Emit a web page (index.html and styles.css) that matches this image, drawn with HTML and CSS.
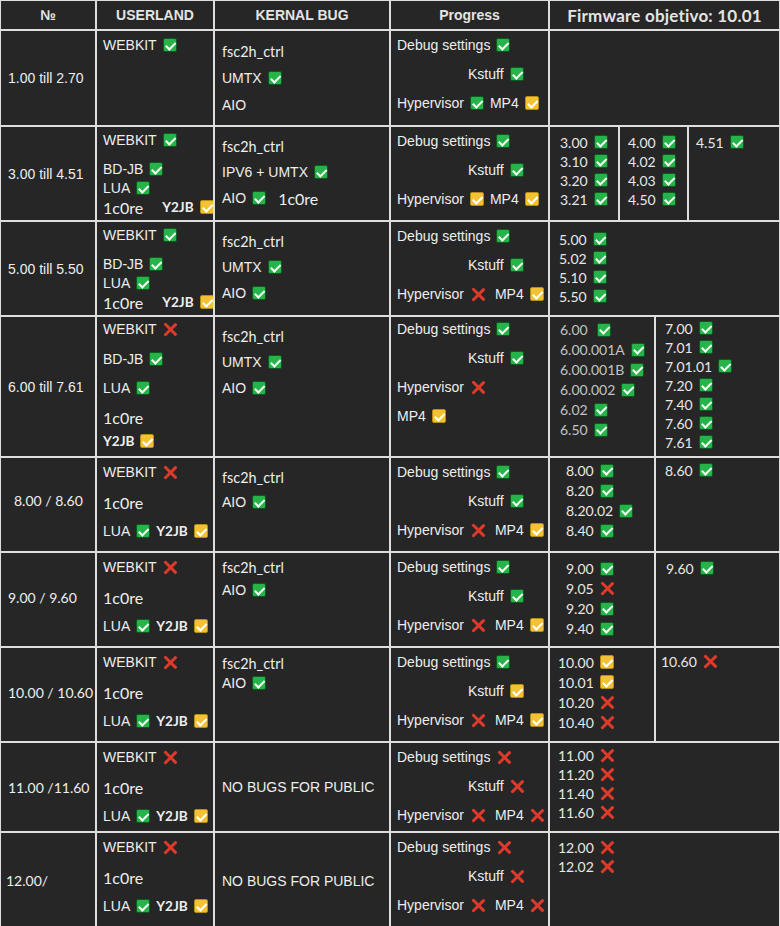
FILE: index.html
```html
<!DOCTYPE html>
<html lang="es">
<head>
<meta charset="utf-8">
<title>PS5 exploit table</title>
<link rel="stylesheet" href="styles.css">
</head>
<body>
<div class="tbl">
  <!-- header -->
  <div class="c hd">№</div>
  <div class="c hd">USERLAND</div>
  <div class="c hd">KERNAL BUG</div>
  <div class="c hd">Progress</div>
  <div class="c hd fw">Firmware objetivo: 10.01</div>

  <!-- row 1 -->
  <div class="c lbl">1.00 till 2.70</div>
  <div class="c st u1"><div class="ln">WEBKIT<i class="ic ok"></i></div></div>
  <div class="c st kr k1">
    <div class="ln cb">fsc2h_ctrl</div>
    <div class="ln">UMTX<i class="ic ok"></i></div>
    <div class="ln">AIO</div>
  </div>
  <div class="c st pg">
    <div class="ln">Debug settings<i class="ic ok"></i></div>
    <div class="ln ks">Kstuff<i class="ic ok"></i></div>
    <div class="ln">Hypervisor<i class="ic ok"></i><span class="sp">MP4</span><i class="ic yl"></i></div>
  </div>
  <div class="c"></div>

  <!-- row 2 -->
  <div class="c lbl">3.00 till 4.51</div>
  <div class="c st uA">
    <div class="ln">WEBKIT<i class="ic ok"></i></div>
    <div class="ln">BD-JB<i class="ic ok"></i></div>
    <div class="ln">LUA<i class="ic ok"></i></div>
    <div class="ln"><span class="cb core">1c0re</span><span class="y2 far">Y2JB</span><i class="ic yl"></i></div>
  </div>
  <div class="c st kr kA">
    <div class="ln cb">fsc2h_ctrl</div>
    <div class="ln">IPV6 + UMTX<i class="ic ok"></i></div>
    <div class="ln">AIO<i class="ic ok"></i><span class="cb core after">1c0re</span></div>
  </div>
  <div class="c st pg">
    <div class="ln">Debug settings<i class="ic ok"></i></div>
    <div class="ln ks">Kstuff<i class="ic ok"></i></div>
    <div class="ln">Hypervisor<i class="ic yl"></i><span class="sp">MP4</span><i class="ic yl"></i></div>
  </div>
  <div class="c split s3">
    <div class="vl p5 l10">
      <div class="v">3.00<i class="ic ok"></i></div>
      <div class="v">3.10<i class="ic ok"></i></div>
      <div class="v">3.20<i class="ic ok"></i></div>
      <div class="v">3.21<i class="ic ok"></i></div>
    </div>
    <div class="vl p5 l8">
      <div class="v">4.00<i class="ic ok"></i></div>
      <div class="v">4.02<i class="ic ok"></i></div>
      <div class="v">4.03<i class="ic ok"></i></div>
      <div class="v">4.50<i class="ic ok"></i></div>
    </div>
    <div class="vl p5 l7">
      <div class="v">4.51<i class="ic ok"></i></div>
    </div>
  </div>

  <!-- row 3 -->
  <div class="c lbl">5.00 till 5.50</div>
  <div class="c st uA">
    <div class="ln">WEBKIT<i class="ic ok"></i></div>
    <div class="ln">BD-JB<i class="ic ok"></i></div>
    <div class="ln">LUA<i class="ic ok"></i></div>
    <div class="ln"><span class="cb core">1c0re</span><span class="y2 far">Y2JB</span><i class="ic yl"></i></div>
  </div>
  <div class="c st kr kA">
    <div class="ln cb">fsc2h_ctrl</div>
    <div class="ln">UMTX<i class="ic ok"></i></div>
    <div class="ln">AIO<i class="ic ok"></i></div>
  </div>
  <div class="c st pg">
    <div class="ln">Debug settings<i class="ic ok"></i></div>
    <div class="ln ks">Kstuff<i class="ic ok"></i></div>
    <div class="ln">Hypervisor<i class="ic no"></i><span class="sp">MP4</span><i class="ic yl"></i></div>
  </div>
  <div class="c vl p7 l9">
    <div class="v">5.00<i class="ic ok"></i></div>
    <div class="v">5.02<i class="ic ok"></i></div>
    <div class="v">5.10<i class="ic ok"></i></div>
    <div class="v">5.50<i class="ic ok"></i></div>
  </div>

  <!-- row 4 -->
  <div class="c lbl">6.00 till 7.61</div>
  <div class="c st uB">
    <div class="ln">WEBKIT<i class="ic no"></i></div>
    <div class="ln">BD-JB<i class="ic ok"></i></div>
    <div class="ln">LUA<i class="ic ok"></i></div>
    <div class="ln"><span class="cb core">1c0re</span></div>
    <div class="ln"><span class="y2">Y2JB</span><i class="ic yl"></i></div>
  </div>
  <div class="c st kr kA">
    <div class="ln cb">fsc2h_ctrl</div>
    <div class="ln">UMTX<i class="ic ok"></i></div>
    <div class="ln">AIO<i class="ic ok"></i></div>
  </div>
  <div class="c st pg p4">
    <div class="ln">Debug settings<i class="ic ok"></i></div>
    <div class="ln ks">Kstuff<i class="ic ok"></i></div>
    <div class="ln">Hypervisor<i class="ic no"></i></div>
    <div class="ln">MP4<i class="ic yl"></i></div>
  </div>
  <div class="c split s2">
    <div class="vl h20 p2 l10 grey">
      <div class="v">6.00<i class="ic ok wide"></i></div>
      <div class="v">6.00.001A<i class="ic ok"></i></div>
      <div class="v">6.00.001B<i class="ic ok"></i></div>
      <div class="v">6.00.002<i class="ic ok"></i></div>
      <div class="v">6.02<i class="ic ok"></i></div>
      <div class="v">6.50<i class="ic ok"></i></div>
    </div>
    <div class="vl p1 l9">
      <div class="v">7.00<i class="ic ok"></i></div>
      <div class="v">7.01<i class="ic ok"></i></div>
      <div class="v">7.01.01<i class="ic ok"></i></div>
      <div class="v">7.20<i class="ic ok"></i></div>
      <div class="v">7.40<i class="ic ok"></i></div>
      <div class="v">7.60<i class="ic ok"></i></div>
      <div class="v">7.61<i class="ic ok"></i></div>
    </div>
  </div>

  <!-- row 5 -->
  <div class="c lbl cb num in up">8.00 / 8.60</div>
  <div class="c st uC">
    <div class="ln">WEBKIT<i class="ic no"></i></div>
    <div class="ln"><span class="cb core">1c0re</span></div>
    <div class="ln">LUA<i class="ic ok"></i><span class="y2 sp">Y2JB</span><i class="ic yl"></i></div>
  </div>
  <div class="c st kr kB">
    <div class="ln cb">fsc2h_ctrl</div>
    <div class="ln">AIO<i class="ic ok"></i></div>
  </div>
  <div class="c st pg">
    <div class="ln">Debug settings<i class="ic ok"></i></div>
    <div class="ln ks">Kstuff<i class="ic ok"></i></div>
    <div class="ln">Hypervisor<i class="ic no"></i><span class="sp">MP4</span><i class="ic yl"></i></div>
  </div>
  <div class="c split s2">
    <div class="vl h20 p2 l16">
      <div class="v">8.00<i class="ic ok"></i></div>
      <div class="v">8.20<i class="ic ok"></i></div>
      <div class="v">8.20.02<i class="ic ok"></i></div>
      <div class="v">8.40<i class="ic ok"></i></div>
    </div>
    <div class="vl p2 l9">
      <div class="v">8.60<i class="ic ok"></i></div>
    </div>
  </div>

  <!-- row 6 -->
  <div class="c lbl cb num up2">9.00 / 9.60</div>
  <div class="c st uC">
    <div class="ln">WEBKIT<i class="ic no"></i></div>
    <div class="ln"><span class="cb core">1c0re</span></div>
    <div class="ln">LUA<i class="ic ok"></i><span class="y2 sp">Y2JB</span><i class="ic yl"></i></div>
  </div>
  <div class="c st kr kC">
    <div class="ln cb">fsc2h_ctrl</div>
    <div class="ln">AIO<i class="ic ok"></i></div>
  </div>
  <div class="c st pg">
    <div class="ln">Debug settings<i class="ic ok"></i></div>
    <div class="ln ks">Kstuff<i class="ic ok"></i></div>
    <div class="ln">Hypervisor<i class="ic no"></i><span class="sp">MP4</span><i class="ic yl"></i></div>
  </div>
  <div class="c split s2">
    <div class="vl h20 p5 l16">
      <div class="v">9.00<i class="ic ok"></i></div>
      <div class="v">9.05<i class="ic no"></i></div>
      <div class="v">9.20<i class="ic ok"></i></div>
      <div class="v">9.40<i class="ic ok"></i></div>
    </div>
    <div class="vl p5 l10">
      <div class="v">9.60<i class="ic ok"></i></div>
    </div>
  </div>

  <!-- row 7 -->
  <div class="c lbl cb num up2">10.00 / 10.60</div>
  <div class="c st uC">
    <div class="ln">WEBKIT<i class="ic no"></i></div>
    <div class="ln"><span class="cb core">1c0re</span></div>
    <div class="ln">LUA<i class="ic ok"></i><span class="y2 sp">Y2JB</span><i class="ic yl"></i></div>
  </div>
  <div class="c st kr kD">
    <div class="ln cb">fsc2h_ctrl</div>
    <div class="ln">AIO<i class="ic ok"></i></div>
  </div>
  <div class="c st pg">
    <div class="ln">Debug settings<i class="ic ok"></i></div>
    <div class="ln ks">Kstuff<i class="ic yl"></i></div>
    <div class="ln">Hypervisor<i class="ic no"></i><span class="sp">MP4</span><i class="ic yl"></i></div>
  </div>
  <div class="c split s2">
    <div class="vl h20 p4 l8">
      <div class="v">10.00<i class="ic yl"></i></div>
      <div class="v">10.01<i class="ic yl"></i></div>
      <div class="v">10.20<i class="ic no"></i></div>
      <div class="v">10.40<i class="ic no"></i></div>
    </div>
    <div class="vl p3 l5">
      <div class="v">10.60<i class="ic no"></i></div>
    </div>
  </div>

  <!-- row 8 -->
  <div class="c lbl cb num">11.00 /11.60</div>
  <div class="c st uC">
    <div class="ln">WEBKIT<i class="ic no"></i></div>
    <div class="ln"><span class="cb core">1c0re</span></div>
    <div class="ln">LUA<i class="ic ok"></i><span class="y2 sp">Y2JB</span><i class="ic yl"></i></div>
  </div>
  <div class="c kr nb">NO BUGS FOR PUBLIC</div>
  <div class="c st pg">
    <div class="ln">Debug settings<i class="ic no"></i></div>
    <div class="ln ks">Kstuff<i class="ic no"></i></div>
    <div class="ln">Hypervisor<i class="ic no"></i><span class="sp">MP4</span><i class="ic no"></i></div>
  </div>
  <div class="c vl p2 l8">
    <div class="v">11.00<i class="ic no"></i></div>
    <div class="v">11.20<i class="ic no"></i></div>
    <div class="v">11.40<i class="ic no"></i></div>
    <div class="v">11.60<i class="ic no"></i></div>
  </div>

  <!-- row 9 -->
  <div class="c lbl cb num l5">12.00/</div>
  <div class="c st uC">
    <div class="ln">WEBKIT<i class="ic no"></i></div>
    <div class="ln"><span class="cb core">1c0re</span></div>
    <div class="ln">LUA<i class="ic ok"></i><span class="y2 sp">Y2JB</span><i class="ic yl"></i></div>
  </div>
  <div class="c kr nb">NO BUGS FOR PUBLIC</div>
  <div class="c st pg">
    <div class="ln">Debug settings<i class="ic no"></i></div>
    <div class="ln ks">Kstuff<i class="ic no"></i></div>
    <div class="ln">Hypervisor<i class="ic no"></i><span class="sp">MP4</span><i class="ic no"></i></div>
  </div>
  <div class="c vl h18 p5 l8">
    <div class="v">12.00<i class="ic no"></i></div>
    <div class="v">12.02<i class="ic no"></i></div>
  </div>
</div>
</body>
</html>
```

FILE: styles.css
```css
* { box-sizing: border-box; }

html, body {
  margin: 0;
  background: #262626;
}

body {
  font-family: "Liberation Sans", Arial, sans-serif;
  font-size: 14px;
  color: #eeeeee;
  overflow: hidden;
}

.tbl {
  width: 780px;
  display: grid;
  grid-template-columns: 94px 116px 174px 157px 229px;
  grid-template-rows: 28px 94px 93px 93px 139px 93px 93px 93px 88px 95px;
  gap: 2px;
  padding: 1px;
  background: #dedede;
}

.c {
  background: #262626;
  overflow: hidden;
  white-space: nowrap;
}

/* header */
.hd {
  display: flex;
  align-items: center;
  justify-content: center;
  font-weight: 700;
  color: #e4e4e4;
}
.hd.fw {
  font-family: Lato, sans-serif;
  font-size: 17px;
  font-weight: 700;
  letter-spacing: 0.2px;
  padding-top: 1px;
}

/* first column labels */
.lbl {
  display: flex;
  align-items: center;
  padding-left: 7px;
}
.lbl.num { font-size: 14px; }
.lbl.in { padding-left: 13px; }
.lbl.l5 { padding-left: 5px; }
.lbl.up { padding-bottom: 9px; }
.lbl.up2 { padding-bottom: 5px; }

/* calibri-like text */
.cb { font-family: Lato, sans-serif; font-size: 14.4px; }
.core { font-size: 16px; }
.y2 {
  font-family: Lato, sans-serif;
  font-weight: 700;
  font-size: 13.6px;
}
.far { margin-left: 19px; }
.after { margin-left: 12px; }

/* stacked lines */
.st {
  display: flex;
  flex-direction: column;
  padding-left: 6px;
}
.ln {
  height: 18px;
  display: flex;
  align-items: center;
  flex-shrink: 0;
}
.sp { margin-left: 6px; }
.no + .sp { margin-left: 10px; }

/* USERLAND patterns */
.u1 { padding-top: 5px; }
.uA { padding-top: 4px; }
.uA .ln:nth-child(2) { margin-top: 11px; }
.uA .ln:nth-child(3),
.uA .ln:nth-child(4) { margin-top: 1px; }
.uB { padding-top: 3px; }
.uB .ln:nth-child(2) { margin-top: 12px; }
.uB .ln:nth-child(3),
.uB .ln:nth-child(4) { margin-top: 11px; }
.uB .ln:nth-child(5) { margin-top: 6px; }
.uC { padding-top: 5px; }
.uC .ln:nth-child(2) { margin-top: 12px; }
.uC .ln:nth-child(3) { margin-top: 11px; }

/* KERNAL column */
.kr { padding-left: 7px; }
.k1 { padding-top: 11px; }
.k1 .ln + .ln { margin-top: 9px; }
.kA { padding-top: 10px; }
.kA .ln + .ln { margin-top: 8px; }
.kB { padding-top: 10px; }
.kB .ln + .ln { margin-top: 7px; }
.kC { padding-top: 5px; }
.kC .ln + .ln { margin-top: 5px; }
.kD { padding-top: 6px; }
.kD .ln + .ln { margin-top: 2px; }
.nb {
  display: flex;
  align-items: center;
}

/* Progress column */
.pg { padding-top: 5px; }
.pg .ln + .ln { margin-top: 11px; }
.pg.p4 { padding-top: 3px; }
.ks { padding-left: 71px; }

/* firmware lists */
.split {
  display: grid;
  gap: 2px;
  background: #dedede;
}
.s3 { grid-template-columns: 68px 67px 90px; }
.s2 { grid-template-columns: 104px 123px; }
.split > .vl { background: #262626; }

.vl {
  display: flex;
  flex-direction: column;
  font-family: Lato, sans-serif;
  font-size: 14px;
  color: #e8e8e8;
}
.v {
  height: 19px;
  display: flex;
  align-items: center;
  flex-shrink: 0;
}
.h20 .v { height: 20px; }
.h18 .v { height: 18.5px; }
.grey { color: #c4c4c4; }

.p1 { padding-top: 1.5px; }
.p2 { padding-top: 2.5px; }
.p3 { padding-top: 3.5px; }
.p4 { padding-top: 4px; }
.p5 { padding-top: 5.5px; }
.p7 { padding-top: 7.5px; }
.l5 { padding-left: 5px; }
.l7 { padding-left: 7px; }
.l8 { padding-left: 8px; }
.l9 { padding-left: 9px; }
.l10 { padding-left: 10px; }
.l16 { padding-left: 16px; }

/* status icons */
.ic {
  display: inline-block;
  position: relative;
  width: 14px;
  height: 14px;
  margin-left: 6px;
  flex-shrink: 0;
}
.ic.wide { margin-left: 9px; }
.ok, .yl {
  border-radius: 2px;
  border: 1px solid #0c5a20;
  background: #25b34a;
}
.yl {
  border-color: #b88d16;
  background: #f3c234;
}
.ok::after, .yl::after {
  content: "";
  position: absolute;
  left: 4px;
  top: 0.5px;
  width: 3.5px;
  height: 7.5px;
  border: solid #f4fff4;
  border-width: 0 2px 2px 0;
  transform: rotate(45deg);
}
.yl::after { border-color: #ffffff; }
.no { margin-left: 7px; }
.no::before, .no::after {
  content: "";
  position: absolute;
  left: 5.7px;
  top: -1.5px;
  width: 2.6px;
  height: 17px;
  border-radius: 1px;
  background: #dc3a2b;
  transform: rotate(45deg);
}
.no::after { transform: rotate(-45deg); }
```
